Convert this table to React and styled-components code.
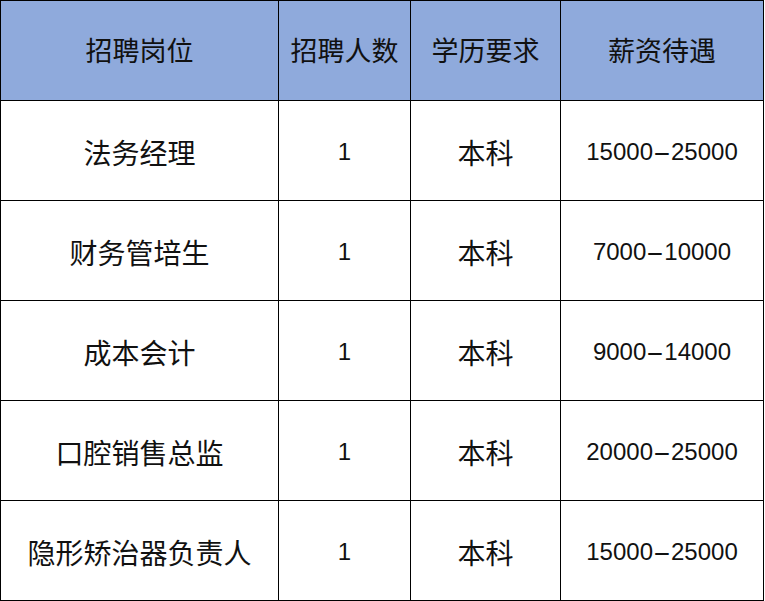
import React from "react";
import styled, { createGlobalStyle } from "styled-components";

const Global = createGlobalStyle`
  html, body { margin: 0; padding: 0; background: #ffffff; }
  body { font-family: "Noto Sans CJK SC", "Noto Sans", sans-serif; }
`;

const Table = styled.table`
  border-collapse: collapse;
  table-layout: fixed;
  width: 763px;
  color: #111;
`;

const Row = styled.tr`
  height: 100px;
`;

const HeadCell = styled.th`
  padding: 0;
  border: 1px solid #000;
  background: #8faadc;
  font-family: "Noto Sans CJK SC", sans-serif;
  font-weight: 400;
  font-size: 27px;
  line-height: 1.2;
  text-align: center;
  vertical-align: middle;
`;

const Cell = styled.td`
  padding: 4px 0 0 0;
  border: 1px solid #000;
  background: #fff;
  text-align: center;
  vertical-align: middle;
  line-height: 1.2;
  font-size: ${(p) => (p.$num ? "24px" : "28px")};
  font-family: ${(p) =>
    p.$num
      ? `"Liberation Sans", Arial, sans-serif`
      : `"Noto Sans CJK SC", sans-serif`};
`;

const Dash = styled.span`
  display: inline-block;
  margin: 0 5px;
  transform: scaleX(2.3);
`;

const columns = [
  { title: "招聘岗位", width: 278 },
  { title: "招聘人数", width: 132 },
  { title: "学历要求", width: 150 },
  { title: "薪资待遇", width: 203 },
];

const rows = [
  ["法务经理", "1", "本科", "15000-25000"],
  ["财务管培生", "1", "本科", "7000-10000"],
  ["成本会计", "1", "本科", "9000-14000"],
  ["口腔销售总监", "1", "本科", "20000-25000"],
  ["隐形矫治器负责人", "1", "本科", "15000-25000"],
];

function Salary({ value }) {
  const [a, b] = value.split("-");
  return (
    <>
      {a}
      <Dash>-</Dash>
      {b}
    </>
  );
}

export default function App() {
  return (
    <>
      <Global />
      <Table>
        <colgroup>
          {columns.map((c) => (
            <col key={c.title} style={{ width: c.width }} />
          ))}
        </colgroup>
        <thead>
          <Row>
            {columns.map((c) => (
              <HeadCell key={c.title}>{c.title}</HeadCell>
            ))}
          </Row>
        </thead>
        <tbody>
          {rows.map((r, i) => (
            <Row key={i}>
              <Cell>{r[0]}</Cell>
              <Cell $num>{r[1]}</Cell>
              <Cell>{r[2]}</Cell>
              <Cell $num>
                <Salary value={r[3]} />
              </Cell>
            </Row>
          ))}
        </tbody>
      </Table>
    </>
  );
}
